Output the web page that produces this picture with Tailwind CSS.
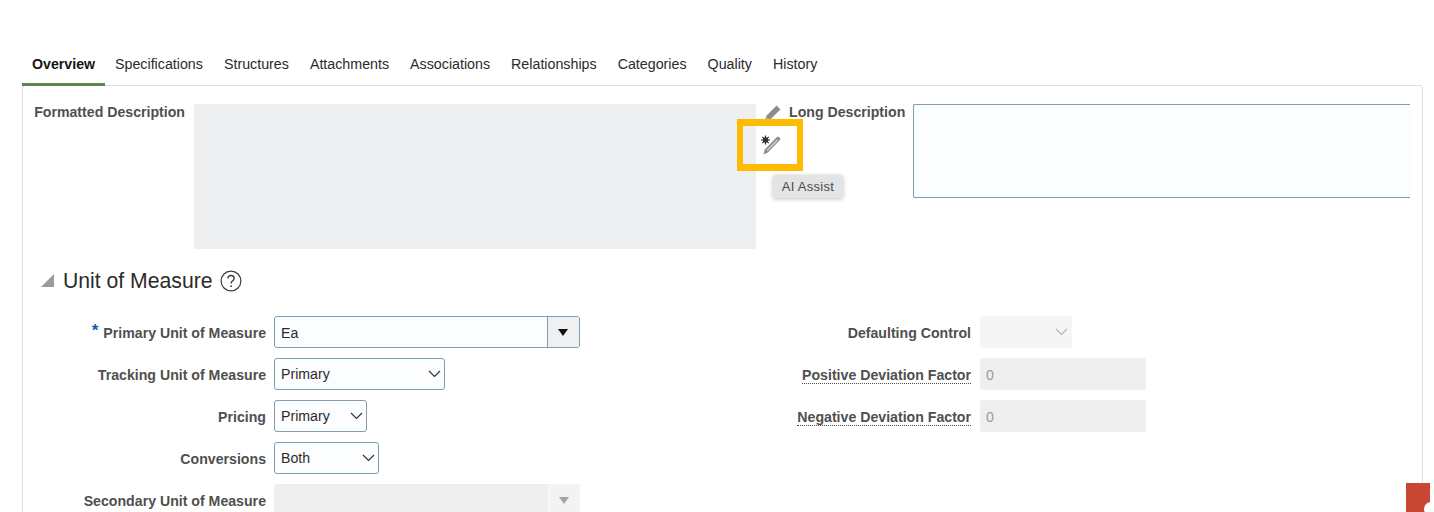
<!DOCTYPE html>
<html lang="en">
<head>
<meta charset="UTF-8">
<title>Overview</title>
<script src="https://cdn.jsdelivr.net/npm/@tailwindcss/browser@4"></script>
</head>
<body class="relative h-[512px] w-[1434px] overflow-hidden bg-white font-['Liberation_Sans',Arial,sans-serif] text-[14.15px] text-[#2b2b2b] antialiased">

<div class="pt-[43px] pl-[22px] pr-[11px]">
  <!-- tabs -->
  <div class="flex h-[43px] items-start">
    <div class="h-[43px] w-[83px] border-b-[3px] border-[#5f8550] pt-[11px] pl-[10px] text-[14.2px] font-bold text-[#161513]">Overview</div>
    <div class="flex gap-[21px] pt-[11px] pl-[10px] text-[14.25px] text-[#2b2b2b]">
      <span>Specifications</span>
      <span>Structures</span>
      <span>Attachments</span>
      <span>Associations</span>
      <span>Relationships</span>
      <span>Categories</span>
      <span>Quality</span>
      <span>History</span>
    </div>
  </div>

  <!-- panel -->
  <div class="-mt-[1px] h-[440px] rounded-t-[3px] border border-[#d5e0e8] pt-[18px]">
    <div class="flex h-[145px] items-start">
      <div class="-mt-[2px] w-[162px] text-right font-bold text-[#4f4f4f]">Formatted Description</div>
      <div class="ml-[9px] h-[145px] w-[562px] bg-[#eeeff1]"></div>
      <svg class="ml-[8px]" width="18" height="18" viewBox="0 0 18 18"><path d="M1 17l1.200-5L12.600 1.600l3.800 3.800L6 15.800z" fill="#8c8c8c"/><path d="M1 17l1.200-5 3.800 3.800z" fill="#a8a8a8"/></svg>
      <div class="-mt-[2px] ml-[7px] w-[115px] font-bold whitespace-nowrap text-[#4f4f4f]">Long Description</div>
      <div class="ml-[9px] h-[94px] w-[497px] rounded-l-[2px] border-y border-l border-[#7f9cac] bg-[#fbfdfe]"></div>
    </div>

    <!-- section heading -->
    <div class="mt-[20px] flex h-[24px] items-center pl-[18px]">
      <span class="-mt-[2px] h-0 w-0 border-b-[13px] border-l-[13px] border-b-[#9a9b9c] border-l-transparent"></span>
      <h2 class="ml-[9px] text-[21.2px] font-normal leading-[24px] text-[#2b2b2b]">Unit of Measure</h2>
      <svg class="ml-[7px]" width="22" height="22" viewBox="0 0 22 22" fill="none" stroke="#3a3a3a" stroke-width="1.2"><circle cx="11" cy="11" r="9.900"/><path d="M7.900 8.600c0-1.900 1.400-3.100 3.200-3.100s3.100 1.100 3.100 2.800c0 2.500-3.100 2.500-3.100 5.100" stroke-width="1.400"/><circle cx="11.100" cy="16.200" r=".9" fill="#3a3a3a" stroke="none"/></svg>
    </div>

    <!-- form -->
    <div class="mt-[23px] flex items-start">
      <div class="grid w-[720px] grid-cols-[243px_1fr] items-center gap-x-[8px] gap-y-[10px]">
        <div class="flex justify-end pt-[3px] font-bold text-[#4f4f4f]"><span class="mr-[5px] -mt-[2px] text-[17px] leading-[20px] text-[#0a5fb4]">*</span>Primary Unit of Measure</div>
        <div class="flex h-[32px] w-[306px] overflow-hidden rounded-[3px] border border-[#7f9cac] bg-[#fcfdfe]">
          <div class="flex-1 pl-[6px] leading-[32px]">Ea</div>
          <div class="flex w-[32px] items-center justify-center border-l border-[#7f9cac] bg-[#eef0f1] pr-[1px]">
            <span class="h-0 w-0 border-x-[5px] border-t-[7px] border-x-transparent border-t-[#111]"></span>
          </div>
        </div>

        <div class="pt-[3px] text-right font-bold text-[#4f4f4f]">Tracking Unit of Measure</div>
        <div class="flex h-[32px] w-[171px] items-center justify-between rounded-[3px] border border-[#7f9cac] bg-[#fcfdfe] pl-[6px] pr-[3px]">
          <span class="pt-[2px]">Primary</span>
          <svg width="13" height="8" viewBox="0 0 13 8" fill="none" stroke="#333" stroke-width="1.2"><path d="M1 1l5.500 5.500L12 1"/></svg>
        </div>

        <div class="pt-[3px] text-right font-bold text-[#4f4f4f]">Pricing</div>
        <div class="flex h-[32px] w-[93px] items-center justify-between rounded-[3px] border border-[#7f9cac] bg-[#fcfdfe] pl-[6px] pr-[3px]">
          <span class="pt-[2px]">Primary</span>
          <svg width="13" height="8" viewBox="0 0 13 8" fill="none" stroke="#333" stroke-width="1.2"><path d="M1 1l5.500 5.500L12 1"/></svg>
        </div>

        <div class="pt-[3px] text-right font-bold text-[#4f4f4f]">Conversions</div>
        <div class="flex h-[32px] w-[105px] items-center justify-between rounded-[3px] border border-[#7f9cac] bg-[#fcfdfe] pl-[6px] pr-[3px]">
          <span class="pt-[2px]">Both</span>
          <svg width="13" height="8" viewBox="0 0 13 8" fill="none" stroke="#333" stroke-width="1.2"><path d="M1 1l5.500 5.500L12 1"/></svg>
        </div>

        <div class="pt-[3px] text-right font-bold text-[#4f4f4f]">Secondary Unit of Measure</div>
        <div class="flex h-[32px] w-[306px] overflow-hidden rounded-[3px] bg-[#efefef]">
          <div class="flex-1"></div>
          <div class="flex w-[32px] items-center justify-center border-l border-[#f8f8f8] bg-[#f3f3f3] pr-[1px]">
            <span class="h-0 w-0 border-x-[5px] border-t-[7px] border-x-transparent border-t-[#a3a3a3]"></span>
          </div>
        </div>
      </div>

      <div class="grid grid-cols-[228px_1fr] items-center gap-x-[9px] gap-y-[10px]">
        <div class="pt-[3px] text-right font-bold text-[#4f4f4f]">Defaulting Control</div>
        <div class="flex h-[32px] w-[92px] items-center justify-end rounded-[3px] bg-[#f5f5f5] pr-[4px]">
          <svg width="13" height="8" viewBox="0 0 13 8" fill="none" stroke="#b5b5b5" stroke-width="1.2"><path d="M1 1l5.500 5.500L12 1"/></svg>
        </div>

        <div class="pt-[3px] text-right font-bold text-[#4f4f4f]"><span class="border-b border-dotted border-[#4f4f4f]">Positive Deviation Factor</span></div>
        <div class="h-[32px] w-[166px] rounded-[3px] bg-[#efeff0] pl-[6px] leading-[35px] text-[#9a9a9a]">0</div>

        <div class="pt-[3px] text-right font-bold text-[#4f4f4f]"><span class="border-b border-dotted border-[#4f4f4f]">Negative Deviation Factor</span></div>
        <div class="h-[32px] w-[166px] rounded-[3px] bg-[#efeff0] pl-[6px] leading-[35px] text-[#9a9a9a]">0</div>
      </div>
    </div>
  </div>
</div>

<!-- highlight over the AI Assist button -->
<div class="absolute left-[737px] top-[119px] h-[52px] w-[66px] border-x-[6px] border-y-[7px] border-[#fdbc00]"></div>
<svg class="absolute left-[760px] top-[134px]" width="22" height="21" viewBox="0 0 22 21"><g stroke="#333" stroke-width="1.200"><path d="M1 6h9M5.500 1.500v9M2.300 2.800l6.400 6.400M8.700 2.800L2.300 9.200"/></g><circle cx="5.500" cy="6" r="2.800" fill="#333"/><path d="M3.500 20.500l1.200-5L16.500 3.500c1-1 2-1 3 0s1 2 0 3L7.800 18.500z" fill="#8c8c8c"/><path d="M6.500 16L17 5.500l1 1L7.500 17z" fill="#d0d0d0"/></svg>

<!-- tooltip -->
<div class="absolute left-[773px] top-[175px] flex h-[23px] w-[70px] items-center justify-center rounded-[3px] bg-[#e4e4e4] text-[13px] tracking-[0.3px] text-[#4a4a4a] shadow-[0_1px_4px_rgba(0,0,0,0.25)]">AI Assist</div>

<!-- help launcher, cut off by the window edge -->
<div class="absolute left-[1406px] top-[483px] h-[29px] w-[24px] overflow-hidden bg-[#c74634]">
  <div class="absolute left-[18px] top-[19px] h-[14px] w-[14px] rounded-full bg-white"></div>
</div>

</body>
</html>
